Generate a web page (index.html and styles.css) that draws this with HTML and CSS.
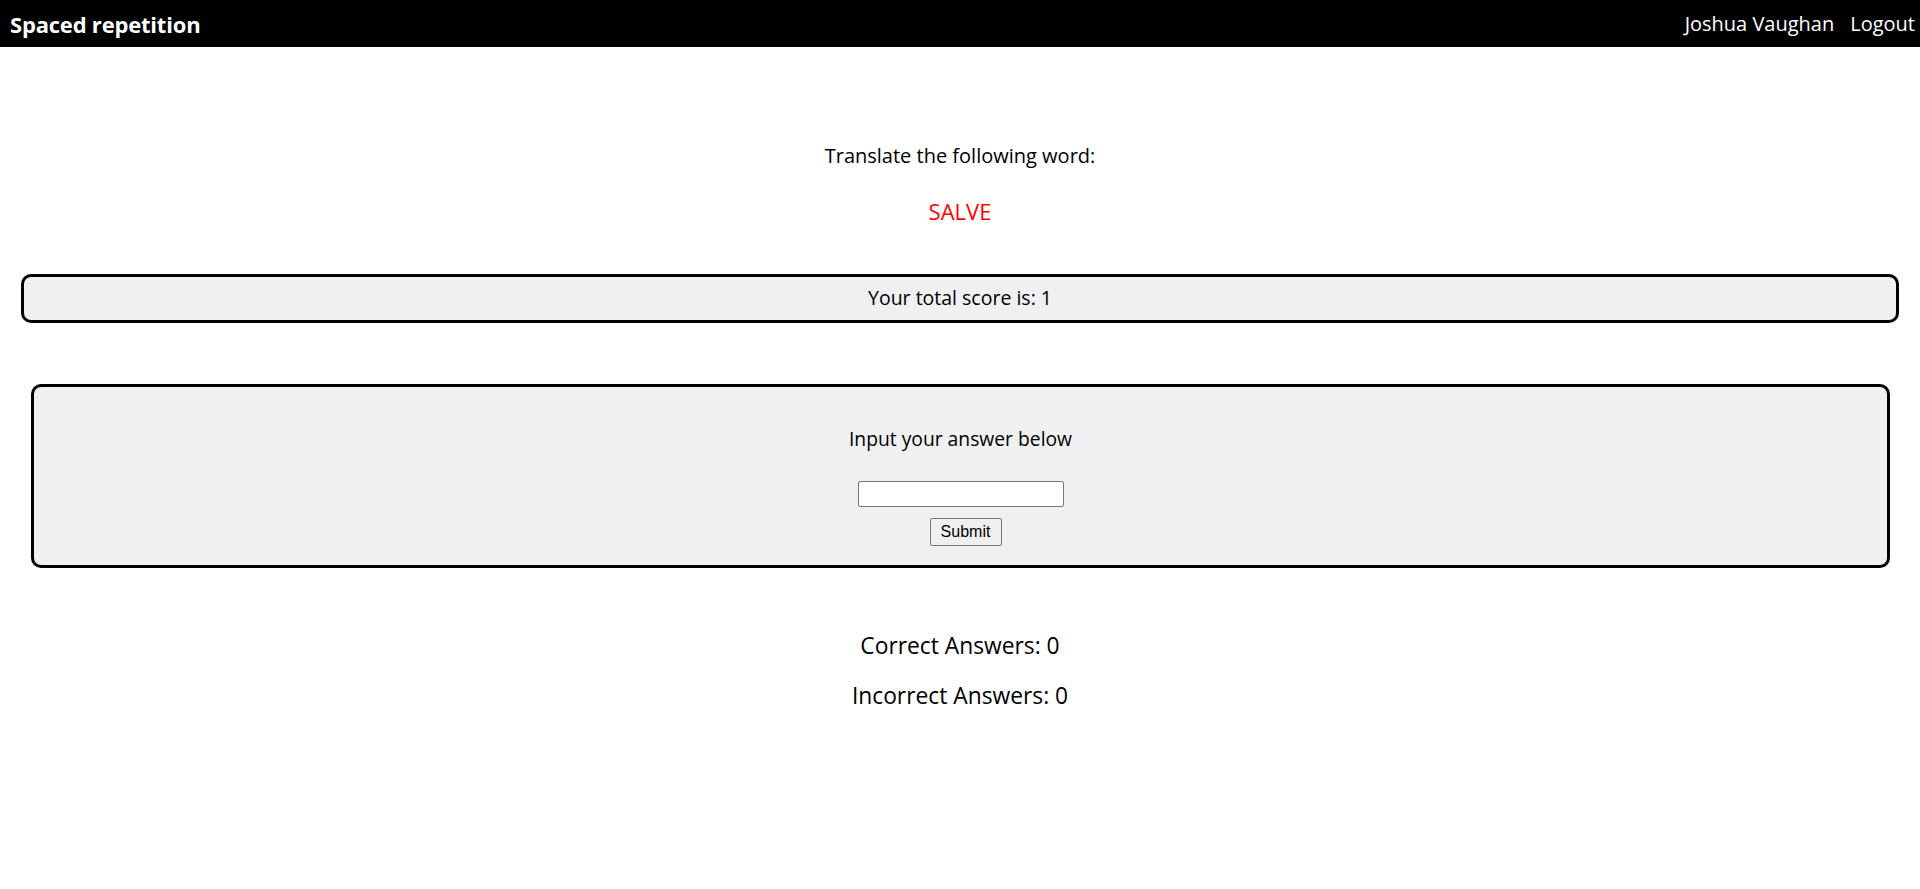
FILE: index.html
```html
<!DOCTYPE html>
<html lang="en">
<head>
<meta charset="utf-8">
<title>Spaced repetition</title>
<link rel="stylesheet" href="styles.css">
</head>
<body>
<header class="topbar">
  <h1 class="brand">Spaced repetition</h1>
  <nav class="user-nav">
    <span class="user-name">Joshua Vaughan</span>
    <a class="logout" href="#">Logout</a>
  </nav>
</header>
<main class="learning">
  <section class="prompt">
    <h2 class="prompt-title">Translate the following word:</h2>
    <p class="word">SALVE</p>
  </section>
  <div class="score-box">Your total score is: 1</div>
  <form class="answer-box">
    <label class="answer-label" for="answer">Input your answer below</label>
    <input class="answer-input" id="answer" type="text">
    <button class="submit-btn" type="submit">Submit</button>
  </form>
  <section class="tally">
    <p class="tally-line">Correct Answers: 0</p>
    <p class="tally-line">Incorrect Answers: 0</p>
  </section>
</main>
</body>
</html>
```

FILE: styles.css
```css
* { box-sizing: border-box; }
body {
  margin: 0;
  font-family: "Open Sans", "DejaVu Sans", sans-serif;
  color: #000;
  background: #fff;
}
.topbar {
  height: 47px;
  background: #000;
  color: #fff;
  display: flex;
  align-items: center;
  justify-content: space-between;
  padding: 0 5px 0 10px;
}
.brand {
  margin: 0;
  font-size: 22px;
  font-weight: 700;
  line-height: 1;
  letter-spacing: -0.2px;
}
.user-nav {
  display: flex;
  gap: 16px;
  font-size: 20px;
}
.user-name, .logout { color: #fff; text-decoration: none; }

.learning { text-align: center; }
.prompt { margin-top: 97px; }
.prompt-title {
  margin: 0;
  font-size: 20px;
  font-weight: 500;
  line-height: 24px;
}
.word {
  margin: 29px 0 0;
  font-size: 22px;
  line-height: 28px;
  color: #ff0000;
}
.score-box {
  margin: 49px 21px 0;
  border: 3px solid #000;
  border-radius: 10px;
  background: #eff0f2;
  padding: 9px 0 10px;
  font-size: 19.5px;
  font-weight: 500;
  line-height: 24px;
}
.answer-box {
  margin: 61px 30px 0 31px;
  border: 3px solid #000;
  border-radius: 10px;
  background: #eff0f2;
  padding: 40px 0 19px;
  display: flex;
  flex-direction: column;
  align-items: center;
}
.answer-label {
  font-size: 19.3px;
  font-weight: 500;
  line-height: 24px;
}
.answer-input {
  margin-top: 30px;
  width: 206px;
  height: 26px;
  border: 1px solid #767676;
  border-radius: 2px;
  background: #fff;
  font: 16px "Liberation Sans", Arial, sans-serif;
  padding: 1px 2px;
}
.submit-btn {
  margin: 11px 0 0 10px;
  width: 72px;
  height: 28px;
  border: 1px solid #767676;
  border-radius: 2px;
  background: #efefef;
  color: #000;
  font: 16px "Liberation Sans", Arial, sans-serif;
  padding: 1px 6px;
}
.tally { margin-top: 64px; }
.tally-line {
  margin: 0 0 22px;
  font-size: 22.8px;
  font-weight: 500;
  line-height: 28px;
}
```
